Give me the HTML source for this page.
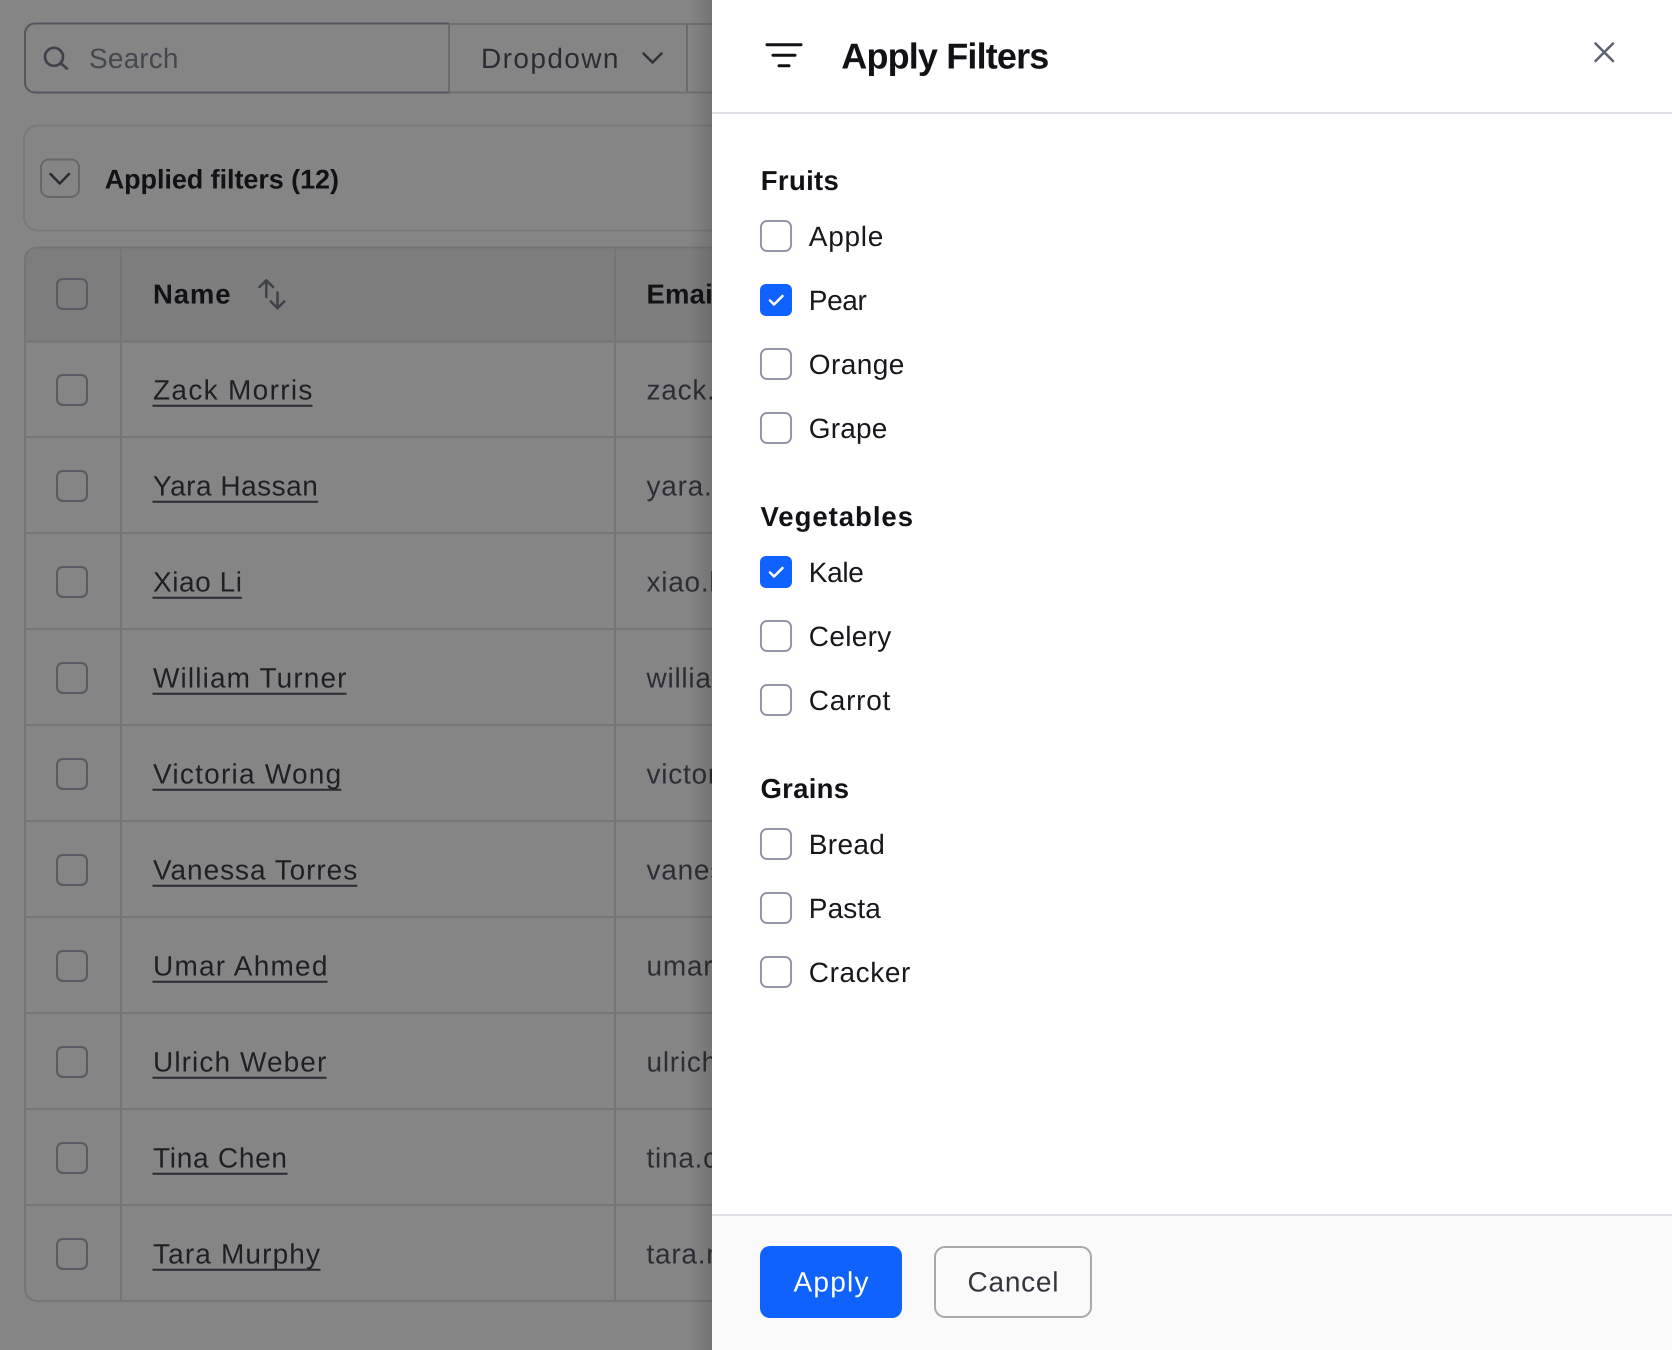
<!DOCTYPE html>
<html lang="en">
<head>
<meta charset="utf-8">
<title>Apply Filters</title>
<style>
html,body{margin:0;padding:0;width:1672px;height:1350px;overflow:hidden;background:#858585}
svg{display:block}
text{font-family:"Liberation Sans",Arial,sans-serif;font-size:28px;text-rendering:geometricPrecision}
.b{font-weight:700;font-size:27.5px}
.n{fill:#1f2026}
.e{fill:#2d2e35;letter-spacing:.75px}
.h{fill:#111216}
.p{fill:#17181c}
.cb{fill:none;stroke:#585b64;stroke-width:2}
.pb{fill:#fff;stroke:#9497a6;stroke-width:2}
.pc{fill:#0f62fe}
.ck{fill:none;stroke:#fff;stroke-width:2.5;stroke-linecap:round;stroke-linejoin:round}
.ln{stroke:#757575;stroke-width:2;fill:none}
.u{stroke:#2a2b33;stroke-width:2}
</style>
</head>
<body>
<svg width="1672" height="1350" viewBox="0 0 1672 1350" xmlns="http://www.w3.org/2000/svg">
<defs>
<linearGradient id="sh" x1="0" x2="1" y1="0" y2="0">
<stop offset="0" stop-color="#000" stop-opacity="0"/>
<stop offset="1" stop-color="#000" stop-opacity=".13"/>
</linearGradient>
</defs>
<rect width="1672" height="1350" fill="#858585"/>

<!-- toolbar -->
<path d="M760 24H449V92.500H760" fill="none" stroke="#6f7074" stroke-width="2"/>
<path d="M449 23.500H35a10 10 0 0 0-10 10v49a10 10 0 0 0 10 10H449" fill="none" stroke="#54565e" stroke-width="2"/>
<path d="M449 24V92M687 24V92" class="ln" style="stroke:#6a6b6f"/>
<circle cx="54" cy="56.800" r="9" fill="none" stroke="#3f424a" stroke-width="2.700"/>
<path d="M60.500 63L66.800 68.500" stroke="#3f424a" stroke-width="2.700" stroke-linecap="round"/>
<text x="89" y="68" textLength="89.500" lengthAdjust="spacing" fill="#45484f">Search</text>
<text x="481" y="68" textLength="137.500" lengthAdjust="spacing" fill="#2a2c33">Dropdown</text>
<path d="M643.500 53.500L652.500 62.500L661.500 53.500" fill="none" stroke="#30323a" stroke-width="2.500" stroke-linecap="round" stroke-linejoin="round"/>

<!-- applied filters -->
<rect x="24" y="125.500" width="760" height="105" rx="14" fill="none" stroke="#7a7a7a" stroke-width="2"/>
<rect x="41" y="159.500" width="38" height="37.500" rx="8" fill="none" stroke="#65676c" stroke-width="2"/>
<path d="M50.500 174L59.700 183.500L69 174" fill="none" stroke="#2b2c33" stroke-width="2.500" stroke-linecap="round" stroke-linejoin="round"/>
<text class="h" x="104.700" y="188.300" textLength="234.300" lengthAdjust="spacing" style="font-weight:700;font-size:27px">Applied filters (12)</text>

<!-- table -->
<path d="M25 341V259a12 12 0 0 1 12-12H760V341Z" fill="#7d7d7d"/>
<path d="M760 247.500H37a12 12 0 0 0-12 12V1289a12 12 0 0 0 12 12H760" class="ln"/>
<path d="M121 247V1300M615 247V1300" class="ln"/>
<path d="M25 341.500H760M25 437H760M25 533H760M25 629H760M25 725H760M25 821H760M25 917H760M25 1013H760M25 1109H760M25 1205H760" class="ln"/>

<rect class="cb" x="57" y="279" width="30" height="30" rx="6"/>
<rect class="cb" x="57" y="375" width="30" height="30" rx="6"/>
<rect class="cb" x="57" y="471" width="30" height="30" rx="6"/>
<rect class="cb" x="57" y="567" width="30" height="30" rx="6"/>
<rect class="cb" x="57" y="663" width="30" height="30" rx="6"/>
<rect class="cb" x="57" y="759" width="30" height="30" rx="6"/>
<rect class="cb" x="57" y="855" width="30" height="30" rx="6"/>
<rect class="cb" x="57" y="951" width="30" height="30" rx="6"/>
<rect class="cb" x="57" y="1047" width="30" height="30" rx="6"/>
<rect class="cb" x="57" y="1143" width="30" height="30" rx="6"/>
<rect class="cb" x="57" y="1239" width="30" height="30" rx="6"/>

<text class="h b" x="153" y="303.300" textLength="77.500" lengthAdjust="spacing">Name</text>
<path d="M266.300 297V280.500M259.500 287L266.300 280.300L273 287M277.500 292.500V308M270.800 301.500L277.500 308.300L284.200 301.500" fill="none" stroke="#3e4149" stroke-width="2.500" stroke-linecap="round" stroke-linejoin="round"/>
<text class="h b" x="646.500" y="303.300" textLength="74" lengthAdjust="spacing">Email</text>

<text class="n" x="153" y="399.300" textLength="159.400" lengthAdjust="spacing">Zack Morris</text>
<text class="n" x="153" y="495.300" textLength="164.800" lengthAdjust="spacing">Yara Hassan</text>
<text class="n" x="153" y="591.300" textLength="89" lengthAdjust="spacing">Xiao Li</text>
<text class="n" x="153" y="687.300" textLength="193.500" lengthAdjust="spacing">William Turner</text>
<text class="n" x="153" y="783.300" textLength="188.200" lengthAdjust="spacing">Victoria Wong</text>
<text class="n" x="153" y="879.300" textLength="204.200" lengthAdjust="spacing">Vanessa Torres</text>
<text class="n" x="153" y="975.300" textLength="174.400" lengthAdjust="spacing">Umar Ahmed</text>
<text class="n" x="153" y="1071.300" textLength="173.300" lengthAdjust="spacing">Ulrich Weber</text>
<text class="n" x="153" y="1167.300" textLength="134" lengthAdjust="spacing">Tina Chen</text>
<text class="n" x="153" y="1263.300" textLength="167" lengthAdjust="spacing">Tara Murphy</text>
<path class="u" d="M152.500 405.700H312.500M152.500 501.700H318M152.500 597.700H242M152.500 693.700H346.500M152.500 789.700H341.200M152.500 885.700H357.200M152.500 981.700H327.500M152.500 1077.700H326.500M152.500 1173.700H287.500M152.500 1269.700H320.500"/>

<text class="e" x="646.500" y="399.300">zack.morris</text>
<text class="e" x="646.500" y="495.300">yara.hassan</text>
<text class="e" x="646.500" y="591.300">xiao.li</text>
<text class="e" x="646.500" y="687.300">william.turner</text>
<text class="e" x="646.500" y="783.300">victoria.wong</text>
<text class="e" x="646.500" y="879.300">vanessa.torres</text>
<text class="e" x="646.500" y="975.300">umar.ahmed</text>
<text class="e" x="646.500" y="1071.300">ulrich.weber</text>
<text class="e" x="646.500" y="1167.300">tina.chen</text>
<text class="e" x="646.500" y="1263.300">tara.murphy</text>

<!-- panel shadow and panel -->
<rect x="688" y="0" width="24" height="1350" fill="url(#sh)"/>
<rect x="712" y="0" width="960" height="1350" fill="#fff"/>

<!-- header -->
<path d="M767 44.700H801M773 55.300H795M779 65.700H789" fill="none" stroke="#111216" stroke-width="3" stroke-linecap="round"/>
<text class="h" x="841.300" y="68.300" textLength="208" lengthAdjust="spacing" style="font-size:36px;font-weight:700">Apply Filters</text>
<path d="M1595.500 43.500L1613 61M1613 43.500L1595.500 61" fill="none" stroke="#5e6272" stroke-width="2.600" stroke-linecap="round"/>
<rect x="712" y="112" width="960" height="2" fill="#e0e0e6"/>

<!-- groups -->
<text class="h b" x="760.800" y="190" textLength="78" lengthAdjust="spacing">Fruits</text>
<rect class="pb" x="761" y="221" width="30" height="30" rx="6"/>
<text class="p" x="808.800" y="246" textLength="74.500" lengthAdjust="spacing">Apple</text>
<rect class="pc" x="760" y="284" width="32" height="32" rx="6"/>
<path class="ck" d="M770 300.500L774 304.500L782.500 296"/>
<text class="p" x="808.800" y="310" textLength="58" lengthAdjust="spacing">Pear</text>
<rect class="pb" x="761" y="349" width="30" height="30" rx="6"/>
<text class="p" x="808.800" y="374" textLength="95.500" lengthAdjust="spacing">Orange</text>
<rect class="pb" x="761" y="413" width="30" height="30" rx="6"/>
<text class="p" x="808.800" y="438" textLength="78.500" lengthAdjust="spacing">Grape</text>

<text class="h b" x="760.500" y="526" textLength="152.500" lengthAdjust="spacing">Vegetables</text>
<rect class="pc" x="760" y="556" width="32" height="32" rx="6"/>
<path class="ck" d="M770 572.500L774 576.500L782.500 568"/>
<text class="p" x="808.800" y="582" textLength="55" lengthAdjust="spacing">Kale</text>
<rect class="pb" x="761" y="621" width="30" height="30" rx="6"/>
<text class="p" x="808.800" y="646" textLength="82.500" lengthAdjust="spacing">Celery</text>
<rect class="pb" x="761" y="685" width="30" height="30" rx="6"/>
<text class="p" x="808.800" y="710" textLength="81.500" lengthAdjust="spacing">Carrot</text>

<text class="h b" x="760.500" y="798" textLength="88.500" lengthAdjust="spacing">Grains</text>
<rect class="pb" x="761" y="829" width="30" height="30" rx="6"/>
<text class="p" x="808.800" y="854" textLength="76" lengthAdjust="spacing">Bread</text>
<rect class="pb" x="761" y="893" width="30" height="30" rx="6"/>
<text class="p" x="808.800" y="918" textLength="72" lengthAdjust="spacing">Pasta</text>
<rect class="pb" x="761" y="957" width="30" height="30" rx="6"/>
<text class="p" x="808.800" y="982" textLength="101.500" lengthAdjust="spacing">Cracker</text>

<!-- footer -->
<rect x="712" y="1214" width="960" height="136" fill="#fafafa"/>
<rect x="712" y="1214" width="960" height="2" fill="#e0e0e6"/>
<rect x="760" y="1246" width="142" height="72" rx="10" fill="#0f62fe"/>
<text x="793.500" y="1291.700" textLength="75" lengthAdjust="spacing" fill="#fff">Apply</text>
<rect x="935" y="1247" width="156" height="70" rx="10" fill="#fafafa" stroke="#a9a9ae" stroke-width="2"/>
<text x="967.500" y="1291.700" textLength="91" lengthAdjust="spacing" fill="#33363d">Cancel</text>
</svg>
</body>
</html>
